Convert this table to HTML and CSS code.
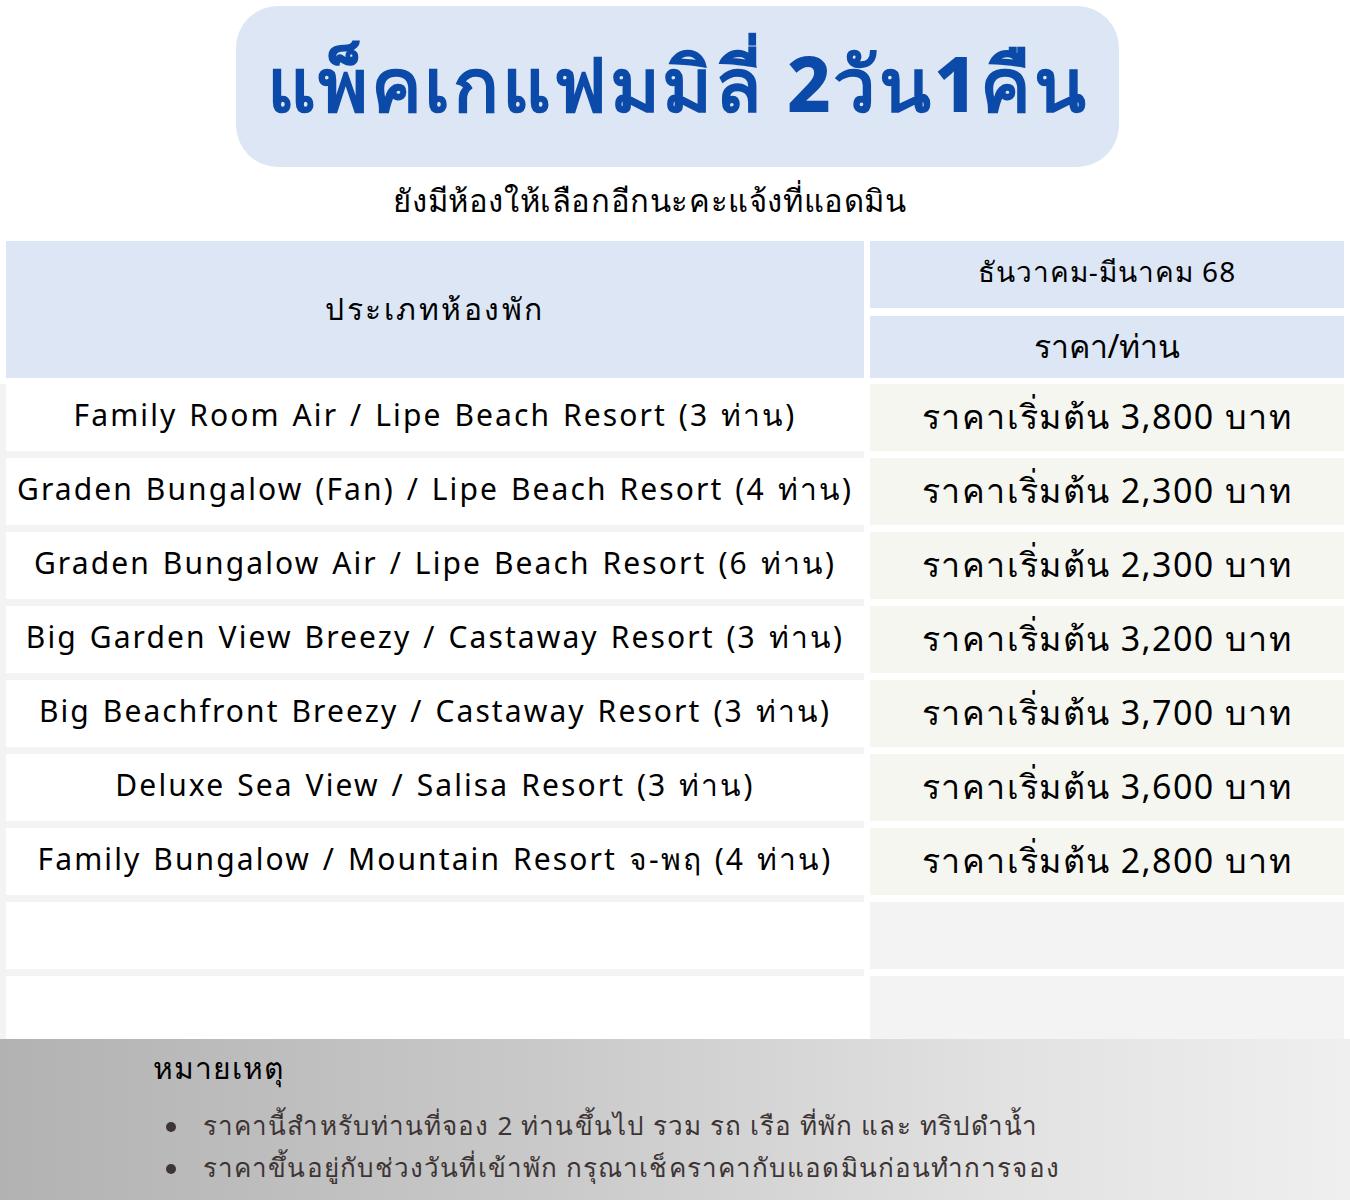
FILE: index.html
```html
<!DOCTYPE html>
<html lang="th">
<head>
<meta charset="utf-8">
<link rel="stylesheet" href="styles.css">
</head>
<body>
<div class="page">
  <header class="hero">
    <div class="pill"><h1 class="title">แพ็คเกแฟมมิลี่ 2วัน1คืน</h1></div>
    <p class="subtitle">ยังมีห้องให้เลือกอีกนะคะแจ้งที่แอดมิน</p>
  </header>

  <div class="table">
    <div class="head-left">ประเภทห้องพัก</div>
    <div class="head-right">
      <div class="head-cell head-top">ธันวาคม-มีนาคม 68</div>
      <div class="head-cell head-bottom">ราคา/ท่าน</div>
    </div>

    <div class="body-left">
      <div class="room">Family Room Air / Lipe Beach Resort (3 ท่าน)</div>
      <div class="room">Graden Bungalow (Fan) / Lipe Beach Resort (4 ท่าน)</div>
      <div class="room">Graden Bungalow Air / Lipe Beach Resort (6 ท่าน)</div>
      <div class="room">Big Garden View Breezy / Castaway Resort (3 ท่าน)</div>
      <div class="room">Big Beachfront Breezy / Castaway Resort (3 ท่าน)</div>
      <div class="room">Deluxe Sea View / Salisa Resort (3 ท่าน)</div>
      <div class="room">Family Bungalow / Mountain Resort จ-พฤ (4 ท่าน)</div>
      <div class="room"></div>
      <div class="room last"></div>
    </div>
    <div class="body-right">
      <div class="price">ราคาเริ่มต้น 3,800 บาท</div>
      <div class="price">ราคาเริ่มต้น 2,300 บาท</div>
      <div class="price">ราคาเริ่มต้น 2,300 บาท</div>
      <div class="price">ราคาเริ่มต้น 3,200 บาท</div>
      <div class="price">ราคาเริ่มต้น 3,700 บาท</div>
      <div class="price">ราคาเริ่มต้น 3,600 บาท</div>
      <div class="price">ราคาเริ่มต้น 2,800 บาท</div>
      <div class="price empty"></div>
      <div class="price empty last"></div>
    </div>
  </div>

  <footer class="notes">
    <h2 class="notes-title">หมายเหตุ</h2>
    <ul class="notes-list">
      <li>ราคานี้สำหรับท่านที่จอง 2 ท่านขึ้นไป รวม รถ เรือ ที่พัก และ ทริปดำน้ำ</li>
      <li>ราคาขึ้นอยู่กับช่วงวันที่เข้าพัก กรุณาเช็คราคากับแอดมินก่อนทำการจอง</li>
    </ul>
  </footer>
</div>
</body>
</html>
```

FILE: styles.css
```css
* { box-sizing: border-box; }
html, body { margin: 0; padding: 0; background: #ffffff; }
body {
  font-family: "Noto Sans", "Liberation Sans", sans-serif;
  color: #000;
  width: 1350px;
  height: 1200px;
  overflow: hidden;
}
.page { display: flex; flex-direction: column; width: 1350px; }

.hero { display: flex; flex-direction: column; align-items: center; padding-top: 6px; }
.pill {
  width: 883px;
  height: 161px;
  margin-left: 5px;
  background: #dce6f4;
  border-radius: 42px;
  display: flex;
  align-items: center;
  justify-content: center;
}
.title {
  margin: 0;
  font-size: 76px;
  font-weight: 800;
  color: #0b4aa8;
  letter-spacing: 2.6px;
  line-height: 1;
  padding-bottom: 8px;
}
.subtitle {
  margin: 0;
  height: 74px;
  padding: 13px 50px 0 0;
  font-size: 31px;
  line-height: 40px;
  letter-spacing: 0.6px;
  text-align: center;
  width: 1350px;
}

.table {
  display: grid;
  grid-template-columns: 864px 480px;
  padding-right: 6px;
  height: 798px;
}
.head-left {
  margin-left: 6px;
  background: #dce6f4;
  height: 137px;
  display: flex; align-items: center; justify-content: center;
  font-size: 30px;
  letter-spacing: 2.5px;
}
.head-right {
  margin-left: 6px;
  display: flex; flex-direction: column; gap: 8px;
  height: 137px;
}
.head-cell {
  background: #dce6f4;
  display: flex; align-items: center; justify-content: center;
}
.head-top { height: 67px; font-size: 28px; letter-spacing: 1px; padding-bottom: 6px; }
.head-bottom { height: 62px; font-size: 32px; padding-bottom: 2px; }

.body-left {
  margin-top: 6px;
  background: #f3f3f3;
  padding-left: 6px;
  display: flex; flex-direction: column; gap: 7px;
}
.room {
  background: #fff;
  height: 67px;
  display: flex; align-items: center; justify-content: center;
  font-size: 30px;
  letter-spacing: 2.1px;
  word-spacing: 2px;
  white-space: nowrap;
  padding-bottom: 4px;
}
.room.last { height: 64px; }

.body-right {
  margin-top: 6px;
  margin-left: 6px;
  display: flex; flex-direction: column; gap: 7px;
}
.price {
  background: #f5f6f0;
  height: 67px;
  display: flex; align-items: center; justify-content: center;
  font-size: 34px;
  letter-spacing: 1.4px;
  white-space: nowrap;
  padding-bottom: 2px;
}
.price.empty { background: #f3f3f3; }
.price.last { height: 64px; }

.notes {
  height: 161px;
  background: linear-gradient(to right, #b2b2b2, #c9c9c9 40%, #e2e2e2 75%, #efefef);
  padding: 10px 0 0 153px;
}
.notes-title {
  margin: 0;
  font-size: 30px;
  font-weight: 400;
  line-height: 38px;
  letter-spacing: 1px;
}
.notes-list {
  list-style: none;
  margin: 17px 0 0 0;
  padding-left: 50px;
  color: #3d3535;
  font-size: 26px;
  line-height: 42px;
  letter-spacing: 1.1px;
}
.notes-list li { position: relative; }
.notes-list li::before {
  content: "";
  position: absolute;
  left: -37px;
  top: 18px;
  width: 10px;
  height: 10px;
  border-radius: 50%;
  background: #3d3535;
}
```
